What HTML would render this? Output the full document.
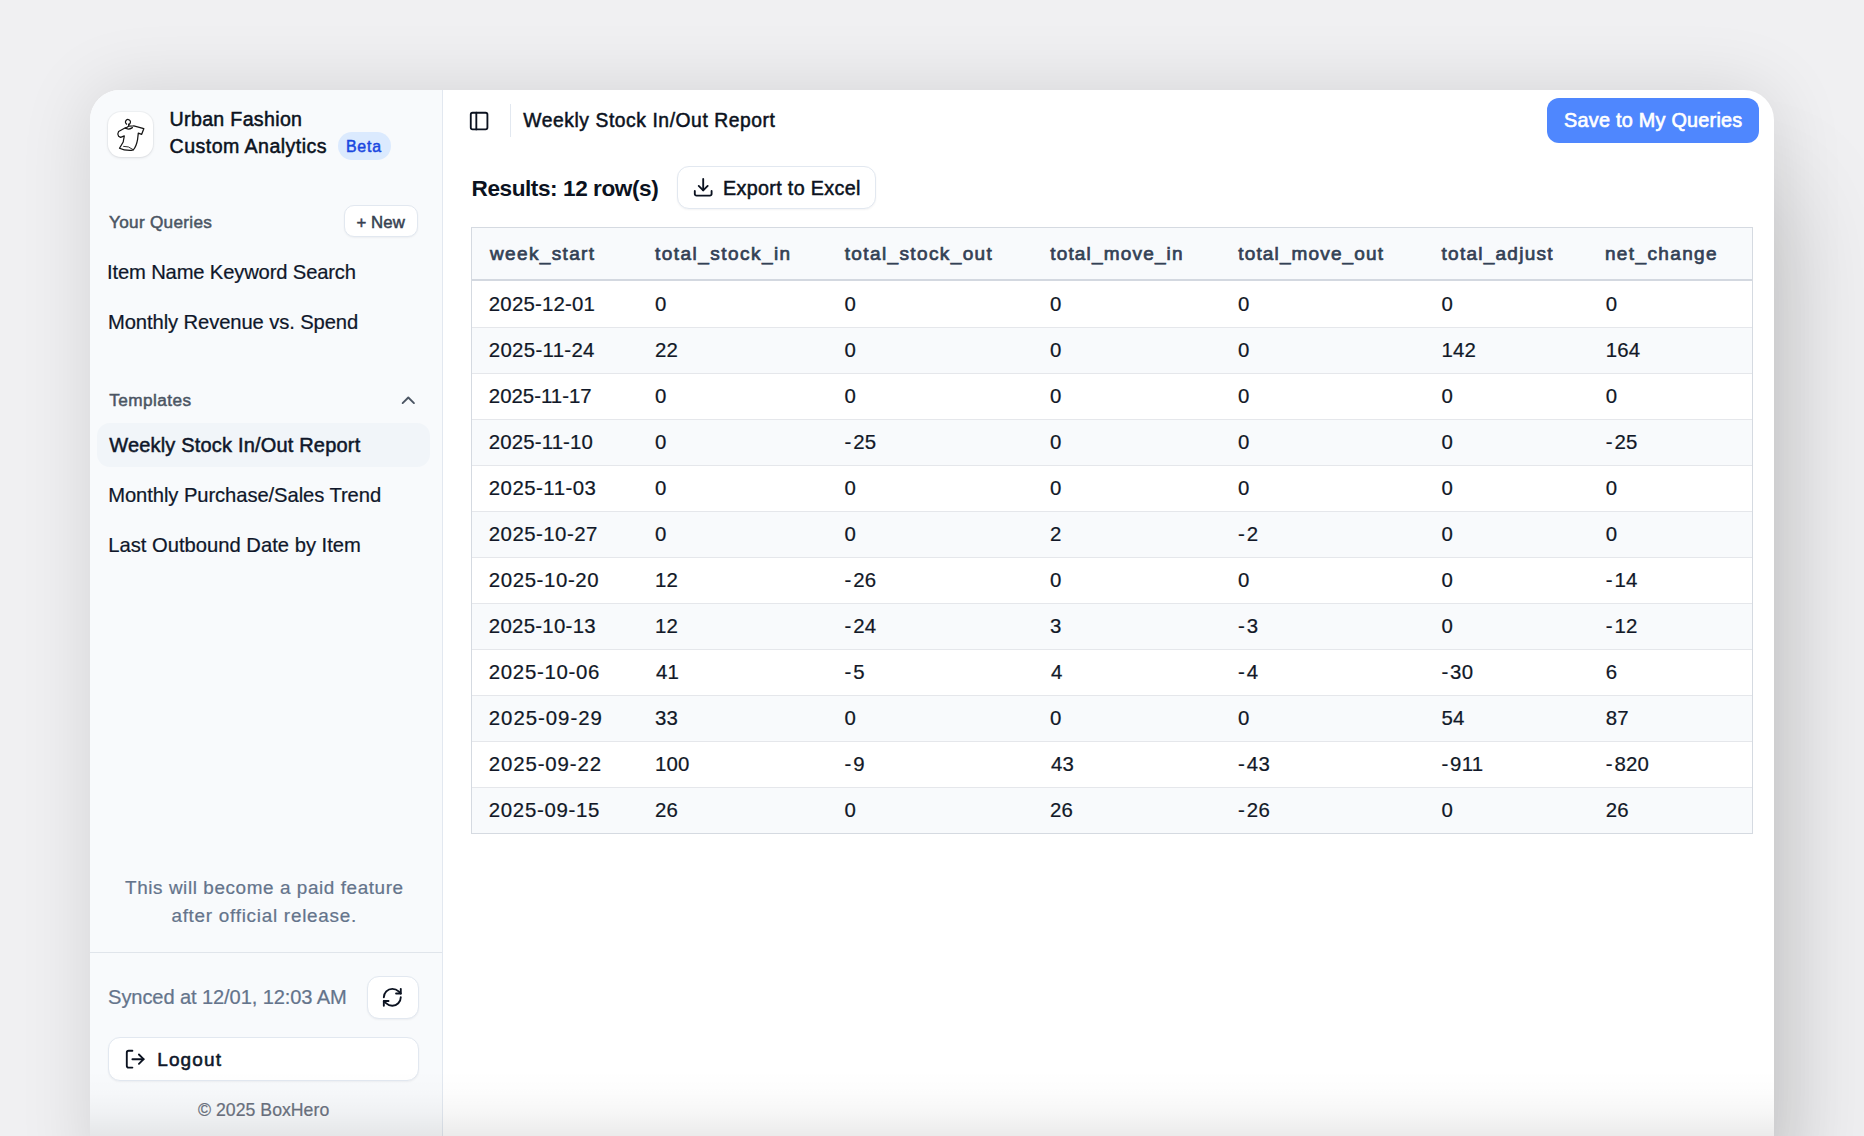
<!DOCTYPE html>
<html><head><meta charset="utf-8"><title>Weekly Stock In/Out Report</title>
<style>
html,body{margin:0;padding:0;width:1864px;height:1136px;overflow:hidden;background:#f0f0f2;font-family:"Liberation Sans", sans-serif;}
.t{position:absolute;white-space:pre;line-height:1;}
#win{position:absolute;left:90px;top:90px;width:1684px;height:1100px;border-radius:30px;background:#fff;overflow:hidden;
box-shadow:0 0 72px rgba(0,0,0,0.12), 60px 60px 100px -40px rgba(0,0,0,0.13);}
#side{position:absolute;left:0;top:0;width:352px;height:1100px;background:#f8fafc;border-right:1px solid #e2e8f0;}
#fade{position:absolute;left:90px;top:1070px;width:1684px;height:66px;background:linear-gradient(to bottom, rgba(0,0,0,0) 0%, rgba(0,0,0,0.012) 35%, rgba(0,0,0,0.035) 65%, rgba(0,0,0,0.08) 100%);}
</style></head><body>
<div id="win"><div id="side"></div></div>

<!-- logo box -->
<div style="position:absolute;left:108px;top:112px;width:45px;height:45px;border-radius:13px;background:#fff;box-shadow:0 1px 3px rgba(15,23,42,0.10),0 0 0 1px rgba(15,23,42,0.03)"></div>
<svg style="position:absolute;left:108px;top:112px" width="45" height="45" viewBox="0 0 45 45" fill="none" stroke="#151515" stroke-width="1.25" stroke-linecap="round" stroke-linejoin="round">
<path d="M20.6 12.4 A2.5 2.5 0 1 0 18.6 12.1"/>
<path d="M20.9 12.2 L20.6 14.2 L17.2 16.4 M20.6 14.2 L25.2 14.0"/>
<path d="M17.4 16.1 Q20.3 18.2 24.4 15.6"/>
<path d="M17.4 15.8 L10.6 19.5 Q9.1 21.8 10.6 24.3 L12.6 25.4 L16.3 23.9 L15.2 30 L11.5 36.3 Q16 38.6 23.2 38.4 L25.3 37.9 Q28.4 34.2 29.6 27.3 L30.3 21.1 L33.7 22.3 L35.8 16.7 L25.8 13.9"/>
<path d="M15.6 34.3 Q20.5 33.8 25.2 37.6" stroke-width="0.9"/>
</svg>
<!-- badge -->
<div style="position:absolute;left:338px;top:132px;width:53px;height:28px;border-radius:14px;background:#dbeafe"></div>
<!-- + New button -->
<div style="position:absolute;left:344px;top:205px;width:74px;height:32px;box-sizing:border-box;border:1px solid #e2e8f0;border-radius:10px;background:#fff;box-shadow:0 1px 2px rgba(15,23,42,0.05)"></div>
<!-- chevron -->
<svg style="position:absolute;left:397px;top:388.7px" width="22.6" height="22.6" viewBox="0 0 24 24" fill="none" stroke="#4b5563" stroke-width="2" stroke-linecap="round" stroke-linejoin="round"><polyline points="18 15 12 9 6 15"/></svg>
<!-- active item -->
<div style="position:absolute;left:97px;top:423px;width:333px;height:44px;border-radius:13px;background:#f1f5f9"></div>
<!-- divider -->
<div style="position:absolute;left:90px;top:952px;width:352px;height:1px;background:#e0e5eb"></div>
<!-- refresh button -->
<div style="position:absolute;left:367px;top:976px;width:52px;height:43px;box-sizing:border-box;border:1px solid #e2e8f0;border-radius:12px;background:#fff;box-shadow:0 1px 2px rgba(15,23,42,0.05)"></div>
<svg style="position:absolute;left:381.3px;top:985.8px" width="22.6" height="22.6" viewBox="0 0 24 24" fill="none" stroke="#0b1220" stroke-width="2" stroke-linecap="round" stroke-linejoin="round"><path d="M3 12a9 9 0 0 1 9-9 9.75 9.75 0 0 1 6.74 2.74L21 8"/><path d="M21 3v5h-5"/><path d="M21 12a9 9 0 0 1-9 9 9.75 9.75 0 0 1-6.74-2.74L3 16"/><path d="M8 16H3v5"/></svg>
<!-- logout button -->
<div style="position:absolute;left:108px;top:1037px;width:311px;height:44px;box-sizing:border-box;border:1px solid #e2e8f0;border-radius:12px;background:#fff;box-shadow:0 1px 2px rgba(15,23,42,0.05)"></div>
<svg style="position:absolute;left:123.5px;top:1048.1px" width="22.4" height="22.4" viewBox="0 0 24 24" fill="none" stroke="#0b1220" stroke-width="2" stroke-linecap="round" stroke-linejoin="round"><path d="M9 21H5a2 2 0 0 1-2-2V5a2 2 0 0 1 2-2h4"/><polyline points="16 17 21 12 16 7"/><line x1="21" y1="12" x2="9" y2="12"/></svg>
<!-- main: panel icon -->
<svg style="position:absolute;left:468.2px;top:109.5px" width="22.2" height="22.2" viewBox="0 0 24 24" fill="none" stroke="#0b1220" stroke-width="2" stroke-linecap="round" stroke-linejoin="round"><rect x="3" y="3" width="18" height="18" rx="2"/><path d="M9 3v18"/></svg>
<div style="position:absolute;left:510px;top:104px;width:1px;height:33px;background:#e2e8f0"></div>
<!-- save button -->
<div style="position:absolute;left:1547px;top:98px;width:212px;height:45px;border-radius:12px;background:#4f87fe"></div>
<!-- export button -->
<div style="position:absolute;left:677px;top:166px;width:199px;height:43px;box-sizing:border-box;border:1px solid #e2e8f0;border-radius:12px;background:#fff;box-shadow:0 1px 2px rgba(15,23,42,0.05)"></div>
<svg style="position:absolute;left:691.7px;top:176.4px" width="22.4" height="22.4" viewBox="0 0 24 24" fill="none" stroke="#0b1220" stroke-width="2" stroke-linecap="round" stroke-linejoin="round"><path d="M3 16.1v3.1a1.8 1.8 0 0 0 1.8 1.8h14.4a1.8 1.8 0 0 0 1.8-1.8v-3.1"/><polyline points="7.2 10.6 12 15.4 16.8 10.6"/><line x1="12" y1="15.4" x2="12" y2="3.2"/></svg>

<div style="position:absolute;left:471px;top:227px;width:1282px;height:607px;border:1px solid #d5dae1;box-sizing:border-box;background:#fff"></div>
<div style="position:absolute;left:472px;top:228px;width:1280px;height:51px;background:#f8fafc"></div>
<div style="position:absolute;left:472px;top:279px;width:1280px;height:2px;background:#d3d8e0"></div>
<div style="position:absolute;left:472px;top:281px;width:1280px;height:46px;background:#ffffff"></div>
<div style="position:absolute;left:472px;top:327px;width:1280px;height:1px;background:#e5e7eb"></div>
<div style="position:absolute;left:472px;top:328px;width:1280px;height:45px;background:#f8fafc"></div>
<div style="position:absolute;left:472px;top:373px;width:1280px;height:1px;background:#e5e7eb"></div>
<div style="position:absolute;left:472px;top:374px;width:1280px;height:45px;background:#ffffff"></div>
<div style="position:absolute;left:472px;top:419px;width:1280px;height:1px;background:#e5e7eb"></div>
<div style="position:absolute;left:472px;top:420px;width:1280px;height:45px;background:#f8fafc"></div>
<div style="position:absolute;left:472px;top:465px;width:1280px;height:1px;background:#e5e7eb"></div>
<div style="position:absolute;left:472px;top:466px;width:1280px;height:45px;background:#ffffff"></div>
<div style="position:absolute;left:472px;top:511px;width:1280px;height:1px;background:#e5e7eb"></div>
<div style="position:absolute;left:472px;top:512px;width:1280px;height:45px;background:#f8fafc"></div>
<div style="position:absolute;left:472px;top:557px;width:1280px;height:1px;background:#e5e7eb"></div>
<div style="position:absolute;left:472px;top:558px;width:1280px;height:45px;background:#ffffff"></div>
<div style="position:absolute;left:472px;top:603px;width:1280px;height:1px;background:#e5e7eb"></div>
<div style="position:absolute;left:472px;top:604px;width:1280px;height:45px;background:#f8fafc"></div>
<div style="position:absolute;left:472px;top:649px;width:1280px;height:1px;background:#e5e7eb"></div>
<div style="position:absolute;left:472px;top:650px;width:1280px;height:45px;background:#ffffff"></div>
<div style="position:absolute;left:472px;top:695px;width:1280px;height:1px;background:#e5e7eb"></div>
<div style="position:absolute;left:472px;top:696px;width:1280px;height:45px;background:#f8fafc"></div>
<div style="position:absolute;left:472px;top:741px;width:1280px;height:1px;background:#e5e7eb"></div>
<div style="position:absolute;left:472px;top:742px;width:1280px;height:45px;background:#ffffff"></div>
<div style="position:absolute;left:472px;top:787px;width:1280px;height:1px;background:#e5e7eb"></div>
<div style="position:absolute;left:472px;top:788px;width:1280px;height:45px;background:#f8fafc"></div>
<div class="t" style="left:169.60px;top:110.00px;font-size:19.6px;font-weight:400;color:#0b1220;letter-spacing:0.325px;-webkit-text-stroke:0.5px #0b1220;">Urban Fashion</div>
<div class="t" style="left:169.60px;top:137.00px;font-size:19.6px;font-weight:400;color:#0b1220;letter-spacing:0.447px;-webkit-text-stroke:0.5px #0b1220;">Custom Analytics</div>
<div class="t" style="left:346.00px;top:139.00px;font-size:15.9px;font-weight:400;color:#1a47e0;letter-spacing:0.767px;-webkit-text-stroke:0.5px #1a47e0;">Beta</div>
<div class="t" style="left:109.00px;top:214.00px;font-size:17.2px;font-weight:400;color:#4b5563;letter-spacing:0.291px;-webkit-text-stroke:0.5px #4b5563;">Your Queries</div>
<div class="t" style="left:356.50px;top:215.00px;font-size:16.8px;font-weight:400;color:#374151;letter-spacing:0.075px;-webkit-text-stroke:0.5px #374151;">+ New</div>
<div class="t" style="left:107.00px;top:262.00px;font-size:20.2px;font-weight:400;color:#0f172a;letter-spacing:-0.148px;-webkit-text-stroke:0.22px #0f172a;">Item Name Keyword Search</div>
<div class="t" style="left:108.00px;top:312.00px;font-size:20.2px;font-weight:400;color:#0f172a;letter-spacing:-0.096px;-webkit-text-stroke:0.22px #0f172a;">Monthly Revenue vs. Spend</div>
<div class="t" style="left:109.20px;top:392.00px;font-size:17.2px;font-weight:400;color:#4b5563;letter-spacing:0.450px;-webkit-text-stroke:0.5px #4b5563;">Templates</div>
<div class="t" style="left:109.20px;top:435.00px;font-size:20.0px;font-weight:400;color:#0f172a;letter-spacing:0.184px;-webkit-text-stroke:0.5px #0f172a;">Weekly Stock In/Out Report</div>
<div class="t" style="left:108.20px;top:485.00px;font-size:20.2px;font-weight:400;color:#0f172a;letter-spacing:-0.074px;-webkit-text-stroke:0.22px #0f172a;">Monthly Purchase/Sales Trend</div>
<div class="t" style="left:108.20px;top:535.00px;font-size:20.2px;font-weight:400;color:#0f172a;letter-spacing:0.008px;-webkit-text-stroke:0.22px #0f172a;">Last Outbound Date by Item</div>
<div class="t" style="left:125.00px;top:879.00px;font-size:18.9px;font-weight:400;color:#64748b;letter-spacing:0.590px;-webkit-text-stroke:0.22px #64748b;">This will become a paid feature</div>
<div class="t" style="left:171.40px;top:907.00px;font-size:18.9px;font-weight:400;color:#64748b;letter-spacing:0.732px;-webkit-text-stroke:0.22px #64748b;">after official release.</div>
<div class="t" style="left:108.10px;top:987.00px;font-size:20.1px;font-weight:400;color:#64748b;letter-spacing:-0.108px;-webkit-text-stroke:0.22px #64748b;">Synced at 12/01, 12:03 AM</div>
<div class="t" style="left:157.20px;top:1050.00px;font-size:19.0px;font-weight:400;color:#0f172a;letter-spacing:1.140px;-webkit-text-stroke:0.55px #0f172a;">Logout</div>
<div class="t" style="left:198.00px;top:1102.00px;font-size:17.7px;font-weight:400;color:#6b7280;letter-spacing:0.015px;-webkit-text-stroke:0.22px #6b7280;">© 2025 BoxHero</div>
<div class="t" style="left:523.30px;top:111.00px;font-size:19.3px;font-weight:400;color:#0b1220;letter-spacing:0.564px;-webkit-text-stroke:0.5px #0b1220;">Weekly Stock In/Out Report</div>
<div class="t" style="left:1564.10px;top:111.00px;font-size:19.8px;font-weight:400;color:#ffffff;letter-spacing:0.259px;-webkit-text-stroke:0.65px #ffffff;">Save to My Queries</div>
<div class="t" style="left:471.50px;top:178.00px;font-size:22.6px;font-weight:700;color:#0b1220;letter-spacing:-0.435px;">Results: 12 row(s)</div>
<div class="t" style="left:723.00px;top:179.00px;font-size:19.7px;font-weight:400;color:#0b1220;letter-spacing:0.357px;-webkit-text-stroke:0.5px #0b1220;">Export to Excel</div>
<div class="t" style="left:490.00px;top:244.00px;font-size:19.0px;font-weight:400;color:#334155;letter-spacing:1.356px;-webkit-text-stroke:0.7px #334155;">week_start</div>
<div class="t" style="left:655.10px;top:244.00px;font-size:19.0px;font-weight:400;color:#334155;letter-spacing:1.454px;-webkit-text-stroke:0.7px #334155;">total_stock_in</div>
<div class="t" style="left:844.70px;top:244.00px;font-size:19.0px;font-weight:400;color:#334155;letter-spacing:1.379px;-webkit-text-stroke:0.7px #334155;">total_stock_out</div>
<div class="t" style="left:1050.20px;top:244.00px;font-size:19.0px;font-weight:400;color:#334155;letter-spacing:1.175px;-webkit-text-stroke:0.7px #334155;">total_move_in</div>
<div class="t" style="left:1238.30px;top:244.00px;font-size:19.0px;font-weight:400;color:#334155;letter-spacing:1.138px;-webkit-text-stroke:0.7px #334155;">total_move_out</div>
<div class="t" style="left:1441.60px;top:244.00px;font-size:19.0px;font-weight:400;color:#334155;letter-spacing:1.245px;-webkit-text-stroke:0.7px #334155;">total_adjust</div>
<div class="t" style="left:1604.90px;top:244.00px;font-size:19.0px;font-weight:400;color:#334155;letter-spacing:1.378px;-webkit-text-stroke:0.7px #334155;">net_change</div>
<div class="t" style="left:488.80px;top:294.00px;font-size:20.4px;font-weight:400;color:#111827;letter-spacing:0.200px;-webkit-text-stroke:0.22px #111827;">2025-12-01</div>
<div class="t" style="left:654.90px;top:294.00px;font-size:20.4px;font-weight:400;color:#111827;letter-spacing:0.250px;-webkit-text-stroke:0.22px #111827;">0</div>
<div class="t" style="left:844.50px;top:294.00px;font-size:20.4px;font-weight:400;color:#111827;letter-spacing:0.250px;-webkit-text-stroke:0.22px #111827;">0</div>
<div class="t" style="left:1050.00px;top:294.00px;font-size:20.4px;font-weight:400;color:#111827;letter-spacing:0.250px;-webkit-text-stroke:0.22px #111827;">0</div>
<div class="t" style="left:1238.10px;top:294.00px;font-size:20.4px;font-weight:400;color:#111827;letter-spacing:0.250px;-webkit-text-stroke:0.22px #111827;">0</div>
<div class="t" style="left:1441.40px;top:294.00px;font-size:20.4px;font-weight:400;color:#111827;letter-spacing:0.250px;-webkit-text-stroke:0.22px #111827;">0</div>
<div class="t" style="left:1605.70px;top:294.00px;font-size:20.4px;font-weight:400;color:#111827;letter-spacing:0.250px;-webkit-text-stroke:0.22px #111827;">0</div>
<div class="t" style="left:488.80px;top:340.00px;font-size:20.4px;font-weight:400;color:#111827;letter-spacing:0.311px;-webkit-text-stroke:0.22px #111827;">2025-11-24</div>
<div class="t" style="left:654.90px;top:340.00px;font-size:20.4px;font-weight:400;color:#111827;letter-spacing:0.250px;-webkit-text-stroke:0.22px #111827;">22</div>
<div class="t" style="left:844.50px;top:340.00px;font-size:20.4px;font-weight:400;color:#111827;letter-spacing:0.250px;-webkit-text-stroke:0.22px #111827;">0</div>
<div class="t" style="left:1050.00px;top:340.00px;font-size:20.4px;font-weight:400;color:#111827;letter-spacing:0.250px;-webkit-text-stroke:0.22px #111827;">0</div>
<div class="t" style="left:1238.10px;top:340.00px;font-size:20.4px;font-weight:400;color:#111827;letter-spacing:0.250px;-webkit-text-stroke:0.22px #111827;">0</div>
<div class="t" style="left:1441.40px;top:340.00px;font-size:20.4px;font-weight:400;color:#111827;letter-spacing:0.250px;-webkit-text-stroke:0.22px #111827;">142</div>
<div class="t" style="left:1605.70px;top:340.00px;font-size:20.4px;font-weight:400;color:#111827;letter-spacing:0.250px;-webkit-text-stroke:0.22px #111827;">164</div>
<div class="t" style="left:488.80px;top:386.00px;font-size:20.4px;font-weight:400;color:#111827;letter-spacing:0.011px;-webkit-text-stroke:0.22px #111827;">2025-11-17</div>
<div class="t" style="left:654.90px;top:386.00px;font-size:20.4px;font-weight:400;color:#111827;letter-spacing:0.250px;-webkit-text-stroke:0.22px #111827;">0</div>
<div class="t" style="left:844.50px;top:386.00px;font-size:20.4px;font-weight:400;color:#111827;letter-spacing:0.250px;-webkit-text-stroke:0.22px #111827;">0</div>
<div class="t" style="left:1050.00px;top:386.00px;font-size:20.4px;font-weight:400;color:#111827;letter-spacing:0.250px;-webkit-text-stroke:0.22px #111827;">0</div>
<div class="t" style="left:1238.10px;top:386.00px;font-size:20.4px;font-weight:400;color:#111827;letter-spacing:0.250px;-webkit-text-stroke:0.22px #111827;">0</div>
<div class="t" style="left:1441.40px;top:386.00px;font-size:20.4px;font-weight:400;color:#111827;letter-spacing:0.250px;-webkit-text-stroke:0.22px #111827;">0</div>
<div class="t" style="left:1605.70px;top:386.00px;font-size:20.4px;font-weight:400;color:#111827;letter-spacing:0.250px;-webkit-text-stroke:0.22px #111827;">0</div>
<div class="t" style="left:488.80px;top:432.00px;font-size:20.4px;font-weight:400;color:#111827;letter-spacing:0.144px;-webkit-text-stroke:0.22px #111827;">2025-11-10</div>
<div class="t" style="left:654.90px;top:432.00px;font-size:20.4px;font-weight:400;color:#111827;letter-spacing:0.250px;-webkit-text-stroke:0.22px #111827;">0</div>
<div class="t" style="left:844.50px;top:432.00px;font-size:20.4px;font-weight:400;color:#111827;letter-spacing:0.250px;-webkit-text-stroke:0.22px #111827;"><span style="letter-spacing:1.9px">-</span>25</div>
<div class="t" style="left:1050.00px;top:432.00px;font-size:20.4px;font-weight:400;color:#111827;letter-spacing:0.250px;-webkit-text-stroke:0.22px #111827;">0</div>
<div class="t" style="left:1238.10px;top:432.00px;font-size:20.4px;font-weight:400;color:#111827;letter-spacing:0.250px;-webkit-text-stroke:0.22px #111827;">0</div>
<div class="t" style="left:1441.40px;top:432.00px;font-size:20.4px;font-weight:400;color:#111827;letter-spacing:0.250px;-webkit-text-stroke:0.22px #111827;">0</div>
<div class="t" style="left:1605.70px;top:432.00px;font-size:20.4px;font-weight:400;color:#111827;letter-spacing:0.250px;-webkit-text-stroke:0.22px #111827;"><span style="letter-spacing:1.9px">-</span>25</div>
<div class="t" style="left:488.80px;top:478.00px;font-size:20.4px;font-weight:400;color:#111827;letter-spacing:0.478px;-webkit-text-stroke:0.22px #111827;">2025-11-03</div>
<div class="t" style="left:654.90px;top:478.00px;font-size:20.4px;font-weight:400;color:#111827;letter-spacing:0.250px;-webkit-text-stroke:0.22px #111827;">0</div>
<div class="t" style="left:844.50px;top:478.00px;font-size:20.4px;font-weight:400;color:#111827;letter-spacing:0.250px;-webkit-text-stroke:0.22px #111827;">0</div>
<div class="t" style="left:1050.00px;top:478.00px;font-size:20.4px;font-weight:400;color:#111827;letter-spacing:0.250px;-webkit-text-stroke:0.22px #111827;">0</div>
<div class="t" style="left:1238.10px;top:478.00px;font-size:20.4px;font-weight:400;color:#111827;letter-spacing:0.250px;-webkit-text-stroke:0.22px #111827;">0</div>
<div class="t" style="left:1441.40px;top:478.00px;font-size:20.4px;font-weight:400;color:#111827;letter-spacing:0.250px;-webkit-text-stroke:0.22px #111827;">0</div>
<div class="t" style="left:1605.70px;top:478.00px;font-size:20.4px;font-weight:400;color:#111827;letter-spacing:0.250px;-webkit-text-stroke:0.22px #111827;">0</div>
<div class="t" style="left:488.80px;top:524.00px;font-size:20.4px;font-weight:400;color:#111827;letter-spacing:0.467px;-webkit-text-stroke:0.22px #111827;">2025-10-27</div>
<div class="t" style="left:654.90px;top:524.00px;font-size:20.4px;font-weight:400;color:#111827;letter-spacing:0.250px;-webkit-text-stroke:0.22px #111827;">0</div>
<div class="t" style="left:844.50px;top:524.00px;font-size:20.4px;font-weight:400;color:#111827;letter-spacing:0.250px;-webkit-text-stroke:0.22px #111827;">0</div>
<div class="t" style="left:1050.00px;top:524.00px;font-size:20.4px;font-weight:400;color:#111827;letter-spacing:0.250px;-webkit-text-stroke:0.22px #111827;">2</div>
<div class="t" style="left:1238.10px;top:524.00px;font-size:20.4px;font-weight:400;color:#111827;letter-spacing:0.250px;-webkit-text-stroke:0.22px #111827;"><span style="letter-spacing:1.9px">-</span>2</div>
<div class="t" style="left:1441.40px;top:524.00px;font-size:20.4px;font-weight:400;color:#111827;letter-spacing:0.250px;-webkit-text-stroke:0.22px #111827;">0</div>
<div class="t" style="left:1605.70px;top:524.00px;font-size:20.4px;font-weight:400;color:#111827;letter-spacing:0.250px;-webkit-text-stroke:0.22px #111827;">0</div>
<div class="t" style="left:488.80px;top:570.00px;font-size:20.4px;font-weight:400;color:#111827;letter-spacing:0.611px;-webkit-text-stroke:0.22px #111827;">2025-10-20</div>
<div class="t" style="left:654.90px;top:570.00px;font-size:20.4px;font-weight:400;color:#111827;letter-spacing:0.250px;-webkit-text-stroke:0.22px #111827;">12</div>
<div class="t" style="left:844.50px;top:570.00px;font-size:20.4px;font-weight:400;color:#111827;letter-spacing:0.250px;-webkit-text-stroke:0.22px #111827;"><span style="letter-spacing:1.9px">-</span>26</div>
<div class="t" style="left:1050.00px;top:570.00px;font-size:20.4px;font-weight:400;color:#111827;letter-spacing:0.250px;-webkit-text-stroke:0.22px #111827;">0</div>
<div class="t" style="left:1238.10px;top:570.00px;font-size:20.4px;font-weight:400;color:#111827;letter-spacing:0.250px;-webkit-text-stroke:0.22px #111827;">0</div>
<div class="t" style="left:1441.40px;top:570.00px;font-size:20.4px;font-weight:400;color:#111827;letter-spacing:0.250px;-webkit-text-stroke:0.22px #111827;">0</div>
<div class="t" style="left:1605.70px;top:570.00px;font-size:20.4px;font-weight:400;color:#111827;letter-spacing:0.250px;-webkit-text-stroke:0.22px #111827;"><span style="letter-spacing:1.9px">-</span>14</div>
<div class="t" style="left:488.80px;top:616.00px;font-size:20.4px;font-weight:400;color:#111827;letter-spacing:0.278px;-webkit-text-stroke:0.22px #111827;">2025-10-13</div>
<div class="t" style="left:654.90px;top:616.00px;font-size:20.4px;font-weight:400;color:#111827;letter-spacing:0.250px;-webkit-text-stroke:0.22px #111827;">12</div>
<div class="t" style="left:844.50px;top:616.00px;font-size:20.4px;font-weight:400;color:#111827;letter-spacing:0.250px;-webkit-text-stroke:0.22px #111827;"><span style="letter-spacing:1.9px">-</span>24</div>
<div class="t" style="left:1050.00px;top:616.00px;font-size:20.4px;font-weight:400;color:#111827;letter-spacing:0.250px;-webkit-text-stroke:0.22px #111827;">3</div>
<div class="t" style="left:1238.10px;top:616.00px;font-size:20.4px;font-weight:400;color:#111827;letter-spacing:0.250px;-webkit-text-stroke:0.22px #111827;"><span style="letter-spacing:1.9px">-</span>3</div>
<div class="t" style="left:1441.40px;top:616.00px;font-size:20.4px;font-weight:400;color:#111827;letter-spacing:0.250px;-webkit-text-stroke:0.22px #111827;">0</div>
<div class="t" style="left:1605.70px;top:616.00px;font-size:20.4px;font-weight:400;color:#111827;letter-spacing:0.250px;-webkit-text-stroke:0.22px #111827;"><span style="letter-spacing:1.9px">-</span>12</div>
<div class="t" style="left:488.80px;top:662.00px;font-size:20.4px;font-weight:400;color:#111827;letter-spacing:0.689px;-webkit-text-stroke:0.22px #111827;">2025-10-06</div>
<div class="t" style="left:655.90px;top:662.00px;font-size:20.4px;font-weight:400;color:#111827;letter-spacing:0.250px;-webkit-text-stroke:0.22px #111827;">41</div>
<div class="t" style="left:844.50px;top:662.00px;font-size:20.4px;font-weight:400;color:#111827;letter-spacing:0.250px;-webkit-text-stroke:0.22px #111827;"><span style="letter-spacing:1.9px">-</span>5</div>
<div class="t" style="left:1051.00px;top:662.00px;font-size:20.4px;font-weight:400;color:#111827;letter-spacing:0.250px;-webkit-text-stroke:0.22px #111827;">4</div>
<div class="t" style="left:1238.10px;top:662.00px;font-size:20.4px;font-weight:400;color:#111827;letter-spacing:0.250px;-webkit-text-stroke:0.22px #111827;"><span style="letter-spacing:1.9px">-</span>4</div>
<div class="t" style="left:1441.40px;top:662.00px;font-size:20.4px;font-weight:400;color:#111827;letter-spacing:0.250px;-webkit-text-stroke:0.22px #111827;"><span style="letter-spacing:1.9px">-</span>30</div>
<div class="t" style="left:1605.70px;top:662.00px;font-size:20.4px;font-weight:400;color:#111827;letter-spacing:0.250px;-webkit-text-stroke:0.22px #111827;">6</div>
<div class="t" style="left:488.80px;top:708.00px;font-size:20.4px;font-weight:400;color:#111827;letter-spacing:0.967px;-webkit-text-stroke:0.22px #111827;">2025-09-29</div>
<div class="t" style="left:654.90px;top:708.00px;font-size:20.4px;font-weight:400;color:#111827;letter-spacing:0.250px;-webkit-text-stroke:0.22px #111827;">33</div>
<div class="t" style="left:844.50px;top:708.00px;font-size:20.4px;font-weight:400;color:#111827;letter-spacing:0.250px;-webkit-text-stroke:0.22px #111827;">0</div>
<div class="t" style="left:1050.00px;top:708.00px;font-size:20.4px;font-weight:400;color:#111827;letter-spacing:0.250px;-webkit-text-stroke:0.22px #111827;">0</div>
<div class="t" style="left:1238.10px;top:708.00px;font-size:20.4px;font-weight:400;color:#111827;letter-spacing:0.250px;-webkit-text-stroke:0.22px #111827;">0</div>
<div class="t" style="left:1441.40px;top:708.00px;font-size:20.4px;font-weight:400;color:#111827;letter-spacing:0.250px;-webkit-text-stroke:0.22px #111827;">54</div>
<div class="t" style="left:1605.70px;top:708.00px;font-size:20.4px;font-weight:400;color:#111827;letter-spacing:0.250px;-webkit-text-stroke:0.22px #111827;">87</div>
<div class="t" style="left:488.80px;top:754.00px;font-size:20.4px;font-weight:400;color:#111827;letter-spacing:0.878px;-webkit-text-stroke:0.22px #111827;">2025-09-22</div>
<div class="t" style="left:654.90px;top:754.00px;font-size:20.4px;font-weight:400;color:#111827;letter-spacing:0.250px;-webkit-text-stroke:0.22px #111827;">100</div>
<div class="t" style="left:844.50px;top:754.00px;font-size:20.4px;font-weight:400;color:#111827;letter-spacing:0.250px;-webkit-text-stroke:0.22px #111827;"><span style="letter-spacing:1.9px">-</span>9</div>
<div class="t" style="left:1051.00px;top:754.00px;font-size:20.4px;font-weight:400;color:#111827;letter-spacing:0.250px;-webkit-text-stroke:0.22px #111827;">43</div>
<div class="t" style="left:1238.10px;top:754.00px;font-size:20.4px;font-weight:400;color:#111827;letter-spacing:0.250px;-webkit-text-stroke:0.22px #111827;"><span style="letter-spacing:1.9px">-</span>43</div>
<div class="t" style="left:1441.40px;top:754.00px;font-size:20.4px;font-weight:400;color:#111827;letter-spacing:0.250px;-webkit-text-stroke:0.22px #111827;"><span style="letter-spacing:1.9px">-</span>911</div>
<div class="t" style="left:1605.70px;top:754.00px;font-size:20.4px;font-weight:400;color:#111827;letter-spacing:0.250px;-webkit-text-stroke:0.22px #111827;"><span style="letter-spacing:1.9px">-</span>820</div>
<div class="t" style="left:488.80px;top:800.00px;font-size:20.4px;font-weight:400;color:#111827;letter-spacing:0.689px;-webkit-text-stroke:0.22px #111827;">2025-09-15</div>
<div class="t" style="left:654.90px;top:800.00px;font-size:20.4px;font-weight:400;color:#111827;letter-spacing:0.250px;-webkit-text-stroke:0.22px #111827;">26</div>
<div class="t" style="left:844.50px;top:800.00px;font-size:20.4px;font-weight:400;color:#111827;letter-spacing:0.250px;-webkit-text-stroke:0.22px #111827;">0</div>
<div class="t" style="left:1050.00px;top:800.00px;font-size:20.4px;font-weight:400;color:#111827;letter-spacing:0.250px;-webkit-text-stroke:0.22px #111827;">26</div>
<div class="t" style="left:1238.10px;top:800.00px;font-size:20.4px;font-weight:400;color:#111827;letter-spacing:0.250px;-webkit-text-stroke:0.22px #111827;"><span style="letter-spacing:1.9px">-</span>26</div>
<div class="t" style="left:1441.40px;top:800.00px;font-size:20.4px;font-weight:400;color:#111827;letter-spacing:0.250px;-webkit-text-stroke:0.22px #111827;">0</div>
<div class="t" style="left:1605.70px;top:800.00px;font-size:20.4px;font-weight:400;color:#111827;letter-spacing:0.250px;-webkit-text-stroke:0.22px #111827;">26</div>
<div id="fade"></div>
</body></html>
